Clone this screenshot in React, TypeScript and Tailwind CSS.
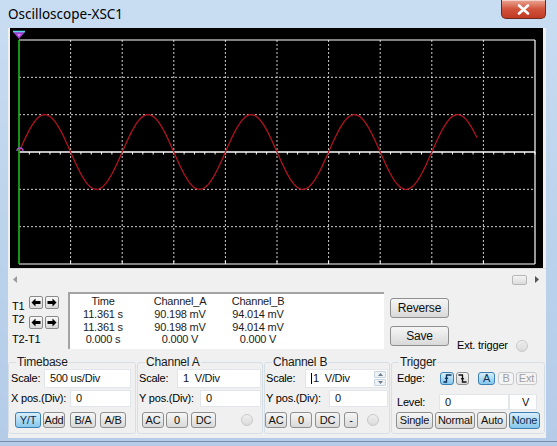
import React from 'react';

const UI = "font-['Liberation_Sans','DejaVu_Sans',sans-serif] text-[11px] tracking-[-0.2px]";

// plot geometry, in the screen svg's coordinates
const OX = 9;
const OY = 12;
const PW = 516;
const PH = 224;
const DX = PW / 10;
const DY = PH / 6;

const sinePath = () => {
  const pts: string[] = [];
  for (let x = 0; x <= 458; x += 1) {
    const y = PH / 2 - DY * Math.sin((2 * Math.PI * x) / (2 * DX));
    pts.push(`${(OX + x).toFixed(1)},${(OY + y).toFixed(1)}`);
  }
  return 'M' + pts.join(' L');
};

const Screen: React.FC = () => {
  const vLines = Array.from({ length: 9 }, (_, i) => OX + DX * (i + 1));
  const hLines = Array.from({ length: 5 }, (_, i) => OY + DY * (i + 1));
  const ticks = Array.from({ length: 50 }, (_, i) => OX + (DX / 5) * (i + 1));
  return (
    <svg width="533" height="240" viewBox="0 0 533 240" className="block">
      <rect x="0" y="0" width="533" height="240" fill="#000" />
      {vLines.map((x) => (
        <line key={'v' + x} x1={x} y1={OY} x2={x} y2={OY + PH} stroke="#cfcfcf" strokeWidth="1" strokeDasharray="2 2" />
      ))}
      {hLines.map((y, i) =>
        i === 2 ? null : (
          <line key={'h' + y} x1={OX} y1={y} x2={OX + PW} y2={y} stroke="#cfcfcf" strokeWidth="1" strokeDasharray="2 2" />
        )
      )}
      {/* centre axis with ticks */}
      <line x1={OX} y1={OY + PH / 2} x2={OX + PW} y2={OY + PH / 2} stroke="#fff" strokeWidth="1.5" />
      {ticks.map((x) => (
        <line key={'t' + x} x1={x} y1={OY + PH / 2} x2={x} y2={OY + PH / 2 + 2.5} stroke="#fff" strokeWidth="1" />
      ))}
      {vLines.map((x) => (
        <line key={'b' + x} x1={x} y1={OY + PH} x2={x} y2={OY + PH - 3} stroke="#fff" strokeWidth="1" />
      ))}
      {/* frame */}
      <line x1={OX} y1={OY} x2={OX + PW} y2={OY} stroke="#fff" strokeWidth="1.2" />
      <line x1={OX + PW} y1={OY} x2={OX + PW} y2={OY + PH} stroke="#fff" strokeWidth="1.2" />
      <line x1={OX} y1={OY + PH} x2={OX + PW} y2={OY + PH} stroke="#fff" strokeWidth="1.2" />
      {/* trace */}
      <path d={sinePath()} fill="none" stroke="#b0121f" strokeWidth="1.3" />
      {/* cursor T1 */}
      <line x1={OX} y1={OY} x2={OX} y2={OY + PH} stroke="#1fc41f" strokeWidth="1.5" />
      <path d={`M${OX - 6},${OY - 8} L${OX + 6},${OY - 8} L${OX},${OY - 1} Z`} fill="#9b3fd0" />
      <line x1={OX - 6} y1={OY - 8.5} x2={OX + 6} y2={OY - 8.5} stroke="#5fd6e8" strokeWidth="1.5" />
      <path d={`M${OX - 2},${OY - 6} L${OX + 2},${OY - 6} L${OX},${OY - 3} Z`} fill="#e080f0" />
      {/* channel A marker */}
      <path d={`M${OX - 2},${OY + PH / 2 - 1} A3 3 0 0 1 ${OX + 4},${OY + PH / 2 - 1}`} fill="none" stroke="#a64fd6" strokeWidth="1.3" />
    </svg>
  );
};

const Btn: React.FC<{ w: number; children: React.ReactNode; on?: boolean; off?: boolean; h?: number; cls?: string }> = ({
  w,
  children,
  on,
  off,
  h = 16,
  cls = '',
}) => (
  <div
    style={{ width: w, height: h }}
    className={
      'flex shrink-0 items-center justify-center rounded-[3px] border leading-none ' +
      (on
        ? 'border-[#3c7fb1] bg-gradient-to-b from-[#d8eefb] to-[#86c7ec] text-[#0b2f57] '
        : off
        ? 'border-[#c5c9cc] bg-[#f4f4f4] text-[#a0a0a0] '
        : 'border-[#8e8f8f] bg-gradient-to-b from-[#f6f6f6] to-[#d9d9d9] text-[#111] ') +
      cls
    }
  >
    {children}
  </div>
);

const Input: React.FC<{ w: number; h: number; children?: React.ReactNode; cls?: string }> = ({ w, h, children, cls = '' }) => (
  <div style={{ width: w, height: h }} className={'flex shrink-0 items-center border border-[#e2e6ea] bg-white pl-[5px] text-[#111] ' + cls}>
    {children}
  </div>
);

const Radio: React.FC = () => (
  <div className="flex h-[12px] w-[12px] shrink-0 items-center justify-center rounded-full border border-[#c9c9c9] bg-gradient-to-b from-[#f0f0f0] to-[#dadada]">
    <div className="h-[5px] w-[5px] rounded-full bg-[#e4e4e4]" />
  </div>
);

const Arrow: React.FC<{ dir: 'l' | 'r' }> = ({ dir }) => (
  <div className="flex h-[13px] w-[14px] items-center justify-center rounded-[2px] border border-[#8a8a8a] bg-gradient-to-b from-[#fafafa] to-[#d8d8d8]">
    <svg width="10" height="9" viewBox="0 0 10 9">
      {dir === 'l' ? (
        <path d="M0.5,4.5 L4.5,0.5 L4.5,3 L9.5,3 L9.5,6 L4.5,6 L4.5,8.5 Z" fill="#000" />
      ) : (
        <path d="M9.5,4.5 L5.5,0.5 L5.5,3 L0.5,3 L0.5,6 L5.5,6 L5.5,8.5 Z" fill="#000" />
      )}
    </svg>
  </div>
);

const Group: React.FC<{ title: string; w: number; children: React.ReactNode }> = ({ title, w, children }) => (
  <fieldset style={{ width: w }} className="h-[79px] shrink-0 rounded-[3px] border border-[#d5dfe5]">
    <legend className="ml-[7px] px-[1px] text-[12px] leading-[14px] text-[#1a1a1a]">{title}</legend>
    {children}
  </fieldset>
);

const App: React.FC = () => {
  return (
    <div className={'flex h-[446px] w-[557px] flex-col overflow-hidden bg-gradient-to-b from-[#c9ddf2] via-[#bcd3ec] to-[#b4cce8] ' + UI}>
      {/* title bar */}
      <div className="flex h-[28px] shrink-0 items-start justify-between">
        <span className="ml-[8px] mt-[5px] font-['Noto_Sans','Open_Sans',sans-serif] text-[13.5px] leading-[18px] tracking-normal text-[#000]">
          Oscilloscope-XSC1
        </span>
        <div className="mr-[11px] flex h-[19px] w-[45px] items-center justify-center rounded-b-[5px] border border-t-0 border-[#6e2a20] bg-gradient-to-b from-[#e9a595] via-[#d2533c] to-[#c13a22] shadow-[inset_0_1px_0_rgba(255,255,255,0.5)]">
          <svg width="13" height="11" viewBox="0 0 13 11">
            <path d="M2,1.5 L11,9.5 M11,1.5 L2,9.5" stroke="#fff" strokeWidth="2.6" strokeLinecap="round" />
          </svg>
        </div>
      </div>

      {/* client area */}
      <div className="ml-[8px] flex h-[410px] w-[538px] flex-col bg-[#f0f0f0] text-[#000]">
        <div className="ml-[2px] border-b border-[#dcdcdc]">
          <Screen />
        </div>

        {/* scrollbar */}
        <div className="mt-[3px] flex h-[15px] items-center">
          <svg width="5" height="7" viewBox="0 0 5 7" className="ml-[5px]">
            <path d="M4,0 L0,3.5 L4,7 Z" fill="#9a9a9a" />
          </svg>
          <div className="ml-auto h-[10px] w-[15px] rounded-[2px] border border-[#b7b7b7] bg-gradient-to-b from-[#f4f4f4] to-[#dcdcdc]" />
          <svg width="5" height="7" viewBox="0 0 5 7" className="ml-[8px] mr-[6px]">
            <path d="M0,0 L4,3.5 L0,7 Z" fill="#555" />
          </svg>
        </div>

        {/* cursors and readout */}
        <div className="flex h-[63px]">
          <div className="flex w-[60px] shrink-0">
            <div className="flex w-[21px] flex-col pl-[4px] pt-[13px] leading-[13px]">
              <span>T1</span>
              <span>T2</span>
              <span className="mt-[7px] whitespace-nowrap">T2-T1</span>
            </div>
            <div className="flex flex-col gap-[7px] pt-[9px]">
              <div className="flex gap-[2px]">
                <Arrow dir="l" />
                <Arrow dir="r" />
              </div>
              <div className="flex gap-[2px]">
                <Arrow dir="l" />
                <Arrow dir="r" />
              </div>
            </div>
          </div>
          <div className="mt-[5px] flex h-[57px] w-[316px] shrink-0 border-l-2 border-t-2 border-[#a3a3a3] bg-white pt-[1px] leading-[12.8px] text-[#1c1c1c]">
            <div className="flex w-[66px] flex-col items-center">
              <span>Time</span>
              <span>11.361 s</span>
              <span>11.361 s</span>
              <span>0.000 s</span>
            </div>
            <div className="flex w-[88px] flex-col items-center">
              <span>Channel_A</span>
              <span>90.198 mV</span>
              <span>90.198 mV</span>
              <span>0.000 V</span>
            </div>
            <div className="flex w-[68px] flex-col items-center">
              <span>Channel_B</span>
              <span>94.014 mV</span>
              <span>94.014 mV</span>
              <span>0.000 V</span>
            </div>
          </div>
          <div className="ml-[6px] mt-[11px] flex flex-col gap-[8px] text-[12px]">
            <Btn w={59} h={20}>Reverse</Btn>
            <Btn w={59} h={20}>Save</Btn>
          </div>
          <div className="ml-[8px] mt-[52px] flex h-[13px] items-center">
            <span className="w-[59px] whitespace-nowrap">Ext. trigger</span>
            <Radio />
          </div>
        </div>

        {/* control groups */}
        <div className="mt-[5px] flex gap-[1px]">
          <Group title="Timebase" w={128}>
            <div className="flex h-[19px] items-center pl-[2px] pr-[4px]">
              <span>Scale:</span>
              <Input w={87} h={19} cls="ml-auto">500 us/Div</Input>
            </div>
            <div className="mt-[2px] flex h-[17px] items-center pl-[2px] pr-[4px]">
              <span className="whitespace-nowrap">X pos.(Div):</span>
              <Input w={61} h={17} cls="ml-auto">0</Input>
            </div>
            <div className="mt-[5px] flex items-center pl-[6px]">
              <Btn w={26} on>Y/T</Btn>
              <Btn w={22} cls="ml-[2px]">Add</Btn>
              <Btn w={26} cls="ml-[5px]">B/A</Btn>
              <Btn w={26} cls="ml-[4px]">A/B</Btn>
            </div>
          </Group>
          <Group title="Channel A" w={126}>
            <div className="flex h-[19px] items-center pl-[1px] pr-[1px]">
              <span>Scale:</span>
              <Input w={84} h={19} cls="ml-auto">1&nbsp;&nbsp;V/Div</Input>
            </div>
            <div className="mt-[2px] flex h-[17px] items-center pl-[1px] pr-[1px]">
              <span className="whitespace-nowrap">Y pos.(Div):</span>
              <Input w={61} h={17} cls="ml-auto">0</Input>
            </div>
            <div className="mt-[5px] flex items-center pl-[4px]">
              <Btn w={22}>AC</Btn>
              <Btn w={22} cls="ml-[2px]">0</Btn>
              <Btn w={25} cls="ml-[3px]">DC</Btn>
              <div className="ml-[25px]">
                <Radio />
              </div>
            </div>
          </Group>
          <Group title="Channel B" w={126}>
            <div className="flex h-[19px] items-center pl-[1px] pr-[1px]">
              <span>Scale:</span>
              <Input w={83} h={19} cls="relative ml-auto border-[#9ac2e6]">
                <span className="mr-[1px] h-[11px] w-px bg-black" />1&nbsp;&nbsp;V/Div
                <div className="absolute right-[1px] top-[1px] flex h-[15px] w-[12px] flex-col gap-px">
                  <div className="flex flex-1 items-center justify-center rounded-[1px] border border-[#c8d4de] bg-[#eef2f5]">
                    <svg width="5" height="3" viewBox="0 0 5 3"><path d="M0,3 L2.5,0 L5,3 Z" fill="#6a7a88" /></svg>
                  </div>
                  <div className="flex flex-1 items-center justify-center rounded-[1px] border border-[#c8d4de] bg-[#eef2f5]">
                    <svg width="5" height="3" viewBox="0 0 5 3"><path d="M0,0 L2.5,3 L5,0 Z" fill="#6a7a88" /></svg>
                  </div>
                </div>
              </Input>
            </div>
            <div className="mt-[2px] flex h-[17px] items-center pl-[1px] pr-[1px]">
              <span className="whitespace-nowrap">Y pos.(Div):</span>
              <Input w={59} h={17} cls="ml-auto">0</Input>
            </div>
            <div className="mt-[5px] flex items-center pl-[0px]">
              <Btn w={22}>AC</Btn>
              <Btn w={22} cls="ml-[3px]">0</Btn>
              <Btn w={25} cls="ml-[3px]">DC</Btn>
              <Btn w={14} cls="ml-[4px]">-</Btn>
              <div className="ml-[9px]">
                <Radio />
              </div>
            </div>
          </Group>
          <Group title="Trigger" w={154}>
            <div className="flex h-[19px] items-center pl-[5px] pr-[7px]">
              <span>Edge:</span>
              <div className="ml-auto flex items-center">
                <Btn w={14} h={13} on>
                  <svg width="9" height="9" viewBox="0 0 9 9">
                    <path d="M0.5,8 H3.5 V1 H8.5" fill="none" stroke="#0b2f57" strokeWidth="1.3" />
                    <path d="M2,5 L3.5,3 L5,5" fill="none" stroke="#0b2f57" strokeWidth="1" />
                  </svg>
                </Btn>
                <Btn w={13} h={13} cls="ml-[2px]">
                  <svg width="9" height="9" viewBox="0 0 9 9">
                    <path d="M0.5,1 H4.5 V8 H8.5" fill="none" stroke="#111" strokeWidth="1.3" />
                    <path d="M3,4 L4.5,6 L6,4" fill="none" stroke="#111" strokeWidth="1" />
                  </svg>
                </Btn>
                <Btn w={17} h={13} on cls="ml-[9px]">A</Btn>
                <Btn w={16} h={13} off cls="ml-[3px]">B</Btn>
                <Btn w={21} h={13} off cls="ml-[2px]">Ext</Btn>
              </div>
            </div>
            <div className="mt-[6px] flex h-[16px] items-center pl-[5px] pr-[7px]">
              <span>Level:</span>
              <div className="ml-auto flex">
                <Input w={70} h={16}>0</Input>
                <Input w={28} h={16} cls="justify-center pl-0">V</Input>
              </div>
            </div>
            <div className="mt-[2px] flex items-center pl-[4px]">
              <Btn w={37} h={17}>Single</Btn>
              <Btn w={40} h={17} cls="ml-[2px]">Normal</Btn>
              <Btn w={30} h={17} cls="ml-[2px]">Auto</Btn>
              <Btn w={31} h={17} on cls="ml-[2px]">None</Btn>
            </div>
          </Group>
        </div>
      </div>
      <div className="mt-[3px] h-px w-full bg-[#7c8fa8]" />
    </div>
  );
};

export default App;
